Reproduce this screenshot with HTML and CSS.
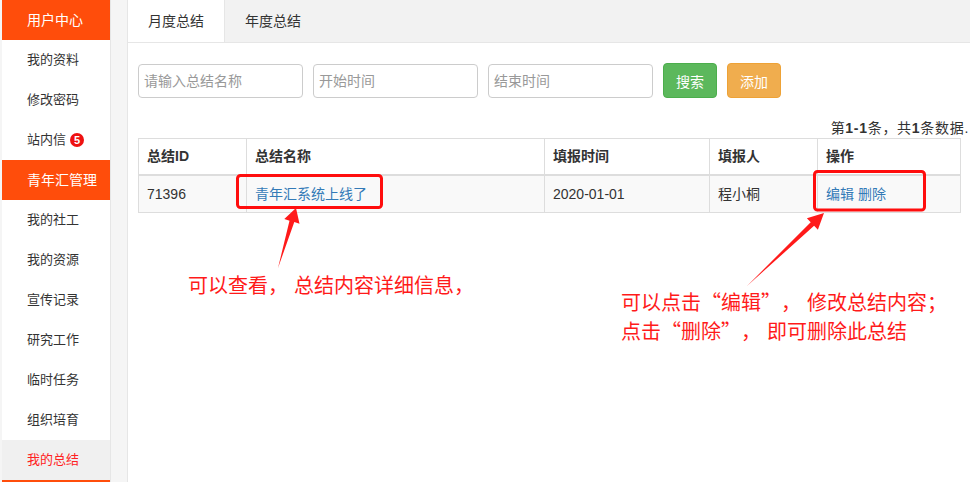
FILE: index.html
```html
<!DOCTYPE html>
<html lang="zh-CN">
<head>
<meta charset="utf-8">
<title>我的总结</title>
<link rel="stylesheet" href="styles.css">
</head>
<body>
<div class="layout">
  <aside class="side">
    <div class="side-head">用户中心</div>
    <div class="side-item">我的资料</div>
    <div class="side-item">修改密码</div>
    <div class="side-item">站内信<span class="badge">5</span></div>
    <div class="side-head">青年汇管理</div>
    <div class="side-item">我的社工</div>
    <div class="side-item">我的资源</div>
    <div class="side-item">宣传记录</div>
    <div class="side-item">研究工作</div>
    <div class="side-item">临时任务</div>
    <div class="side-item">组织培育</div>
    <div class="side-item active">我的总结</div>
    <div class="side-foot"></div>
  </aside>
  <main class="main">
    <nav class="tabs">
      <div class="tab active">月度总结</div>
      <div class="tab">年度总结</div>
    </nav>
    <div class="content">
      <div class="toolbar">
        <input class="field" type="text" placeholder="请输入总结名称">
        <input class="field" type="text" placeholder="开始时间">
        <input class="field" type="text" placeholder="结束时间">
        <button class="btn btn-green">搜索</button>
        <button class="btn btn-orange">添加</button>
      </div>
      <div class="summary">第<b>1-1</b>条，共<b>1</b>条数据.</div>
      <table class="grid">
        <colgroup>
          <col class="c1"><col class="c2"><col class="c3"><col class="c4"><col class="c5">
        </colgroup>
        <thead>
          <tr><th>总结ID</th><th>总结名称</th><th>填报时间</th><th>填报人</th><th>操作</th></tr>
        </thead>
        <tbody>
          <tr>
            <td>71396</td>
            <td><a href="#">青年汇系统上线了</a></td>
            <td>2020-01-01</td>
            <td>程小桐</td>
            <td><a href="#">编辑</a> <a href="#">删除</a></td>
          </tr>
        </tbody>
      </table>
    </div>
  </main>
</div>

<svg class="marks" width="970" height="482" viewBox="0 0 970 482">
  <rect x="237.5" y="175.5" width="144" height="32" rx="3" fill="none" stroke="#ff0d0d" stroke-width="3"/>
  <rect x="814.5" y="171.5" width="110" height="38.5" rx="3" fill="none" stroke="#ff0d0d" stroke-width="3"/>
  <polygon points="278,268 289.5,220.7 284.3,219.1 296,208 299.5,223.7 294.3,222.1" fill="#ff1a1a"/>
  <polygon points="747,286 810.7,222.2 806.9,218.2 824,213 817.9,229.8 814.1,225.8" fill="#ff1a1a"/>
</svg>
<div class="note note-a">可以查看<span class="punc">，</span>总结内容详细信息<span class="punc">，</span></div>
<div class="note note-b">可以点击<span class="qo">“</span>编辑<span class="qc">”</span><span class="punc">，</span>修改总结内容<span class="punc">；</span><br>点击<span class="qo">“</span>删除<span class="qc">”</span><span class="punc">，</span>即可删除此总结</div>
</body>
</html>
```

FILE: styles.css
```css
html { overflow: hidden; }
body {
  margin: 0;
  background: #f5f5f5;
  font-family: "Liberation Sans", "Noto Sans CJK SC", sans-serif;
  color: #333;
  position: relative;
  height: 482px;
}
.layout {
  display: flex;
  align-items: flex-start;
  height: 482px;
}
.side {
  width: 108px;
  margin-left: 2px;
  background: #fff;
  border-right: 1px solid #e6e6e6;
  flex-shrink: 0;
}
.side-head {
  height: 40px;
  line-height: 40px;
  padding-left: 25px;
  background: #ff4d0b;
  color: #fff;
  font-size: 14px;
}
.side-foot {
  height: 2px;
  background: #ff4d0b;
}
.side-item {
  height: 40px;
  line-height: 40px;
  padding-left: 25px;
  font-size: 13px;
  color: #333;
  display: flex;
  align-items: center;
}
.side-item.active {
  background: #f0f0f0;
  color: #ff2222;
}
.badge {
  display: inline-block;
  width: 14px;
  height: 14px;
  line-height: 14px;
  border-radius: 50%;
  background: #ee1111;
  color: #fff;
  font-size: 11px;
  font-weight: bold;
  text-align: center;
  margin-left: 4px;
}
.main {
  flex: 1;
  margin-left: 16px;
  height: 482px;
  background: #fff;
  border-left: 1px solid #e6e6e6;
}
.tabs {
  display: flex;
  height: 42px;
  background: #f2f2f2;
  border-bottom: 1px solid #e6e6e6;
}
.tab {
  padding: 0 20px;
  line-height: 42px;
  font-size: 14px;
  color: #333;
}
.tab.active {
  background: #fff;
  border-right: 1px solid #e6e6e6;
}
.content {
  padding: 20px 1px 0 10px;
}
.toolbar {
  display: flex;
  gap: 10px;
  align-items: center;
}
.field {
  box-sizing: border-box;
  width: 165px;
  height: 34px;
  border: 1px solid #ccc;
  border-radius: 4px;
  padding: 0 5px;
  font-family: "Liberation Sans", "Noto Sans CJK SC", sans-serif;
  font-size: 14px;
  color: #555;
  margin: 0;
}
.field::placeholder { color: #999; }
.btn {
  box-sizing: border-box;
  height: 35px;
  width: 54px;
  border: 1px solid transparent;
  border-radius: 4px;
  color: #fff;
  font-family: "Liberation Sans", "Noto Sans CJK SC", sans-serif;
  font-size: 14px;
  padding: 0;
  margin: 0;
}
.btn-green { background: #5cb85c; border-color: #4cae4c; }
.btn-orange { background: #f0ad4e; border-color: #eea236; }
.summary {
  padding-top: 20px;
  line-height: 20px;
  font-size: 14px;
  letter-spacing: 0.7px;
  text-align: right;
  color: #333;
}
.grid {
  width: 822px;
  border-collapse: collapse;
  table-layout: fixed;
  font-size: 14px;
}
.c1 { width: 108px; }
.c2 { width: 298px; }
.c3 { width: 165px; }
.c4 { width: 108px; }
.c5 { width: 143px; }
.grid th, .grid td {
  border: 1px solid #ddd;
  padding: 8px;
  text-align: left;
  line-height: 20px;
}
.grid th {
  font-weight: bold;
  line-height: 19px;
  border-bottom: 2px solid #ddd;
}
.grid tbody tr { background: #f9f9f9; }
.grid a { color: #337ab7; text-decoration: none; }
.marks {
  position: absolute;
  left: 0;
  top: 0;
  pointer-events: none;
}
.note {
  position: absolute;
  font-family: "Noto Sans CJK SC", sans-serif;
  font-size: 20px;
  line-height: 29px;
  color: #ff1a1a;
  white-space: nowrap;
}
.note .punc,
.note .qo,
.note .qc {
  display: inline-block;
  width: 20px;
}
.note .qo { text-align: right; }
.note .qc { text-align: left; }
.note .punc { width: 26px; text-align: left; }
.note-a { left: 188px; top: 270px; }
.note-b { left: 621px; top: 287px; }
```
